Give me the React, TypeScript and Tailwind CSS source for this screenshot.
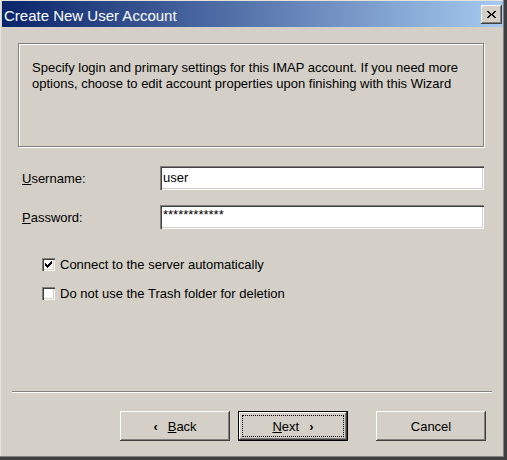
import React from "react";

const raised =
  "shadow-[inset_-1px_-1px_0_#404040,inset_1px_1px_0_#ffffff,inset_-2px_-2px_0_#808080,inset_2px_2px_0_#d4d0c8]";
const sunken =
  "shadow-[inset_1px_1px_0_#808080,inset_2px_2px_0_#404040,inset_-1px_-1px_0_#ffffff,inset_-2px_-2px_0_#d4d0c8]";

function Checkbox({ checked }: { checked: boolean }) {
  return (
    <div className={`relative w-[13px] h-[13px] shrink-0 bg-white ${sunken}`}>
      {checked && (
        <svg width="13" height="13" className="absolute inset-0" shapeRendering="crispEdges">
          <g fill="#000">
            <rect x="9" y="3" width="1" height="1" />
            <rect x="8" y="4" width="2" height="1" />
            <rect x="3" y="5" width="1" height="1" />
            <rect x="7" y="5" width="3" height="1" />
            <rect x="3" y="6" width="2" height="1" />
            <rect x="6" y="6" width="3" height="1" />
            <rect x="3" y="7" width="5" height="1" />
            <rect x="4" y="8" width="3" height="1" />
            <rect x="5" y="9" width="1" height="1" />
          </g>
        </svg>
      )}
    </div>
  );
}

function CloseGlyph() {
  return (
    <svg width="9" height="7" shapeRendering="crispEdges">
      <g fill="#000">
        <rect x="0" y="0" width="2" height="1" />
        <rect x="7" y="0" width="2" height="1" />
        <rect x="1" y="1" width="2" height="1" />
        <rect x="6" y="1" width="2" height="1" />
        <rect x="2" y="2" width="2" height="1" />
        <rect x="5" y="2" width="2" height="1" />
        <rect x="3" y="3" width="3" height="1" />
        <rect x="2" y="4" width="2" height="1" />
        <rect x="5" y="4" width="2" height="1" />
        <rect x="1" y="5" width="2" height="1" />
        <rect x="6" y="5" width="2" height="1" />
        <rect x="0" y="6" width="2" height="1" />
        <rect x="7" y="6" width="2" height="1" />
      </g>
    </svg>
  );
}

export default function App() {
  return (
    <div className="w-[507px] h-[460px] bg-[#d4d0c8] flex flex-col text-[13px] leading-[15px] text-black font-['Liberation_Sans',Arial,sans-serif] shadow-[inset_-3px_-3px_0_#404040,inset_-4px_-4px_0_#808080,inset_1px_1px_0_#e6e3dd] overflow-hidden">
      {/* Title bar */}
      <div className="mt-[1px] ml-[2px] mr-[4px] h-[26px] flex items-center justify-between pl-[2px] pr-[1px] bg-[linear-gradient(to_right,#0a246a,#a6caf0)]">
        <span className="text-white text-[15px] leading-[17px] pt-[2px]">Create New User Account</span>
        <div className={`w-[21px] h-[19px] flex items-center justify-center bg-[#d4d0c8] ${raised}`}>
          <CloseGlyph />
        </div>
      </div>

      {/* Description */}
      <div className="mt-[16px] ml-[18px] w-[466px] h-[104px] border border-[#808080] shadow-[inset_1px_1px_0_#ffffff,1px_1px_0_#ffffff] pl-[13px] pt-[16px] leading-[16px]">
        Specify login and primary settings for this IMAP account. If you need more
        <br />
        options, choose to edit account properties upon finishing with this Wizard
      </div>

      {/* Username */}
      <div className="mt-[19px] ml-[22px] flex">
        <div className="w-[138px] pt-[5px]">
          <u>U</u>sername:
        </div>
        <div className={`w-[324px] h-[24px] bg-white pl-[3px] pt-[4px] ${sunken}`}>user</div>
      </div>

      {/* Password */}
      <div className="mt-[15px] ml-[22px] flex">
        <div className="w-[138px] pt-[5px]">
          <u>P</u>assword:
        </div>
        <div className={`w-[324px] h-[24px] bg-white pl-[3px] pt-[2px] ${sunken}`}>************</div>
      </div>

      {/* Checkboxes */}
      <div className="mt-[28px] ml-[42px] flex items-center gap-[5px]">
        <Checkbox checked />
        <span>Connect to the server automatically</span>
      </div>
      <div className="mt-[14px] ml-[42px] flex items-center gap-[5px]">
        <Checkbox checked={false} />
        <span>Do not use the Trash folder for deletion</span>
      </div>

      {/* Separator */}
      <div className="mt-[90px] ml-[12px] w-[480px] h-[2px] border-t border-b border-t-[#808080] border-b-white" />

      {/* Buttons */}
      <div className="mt-[18px] ml-[120px] flex">
        <div className={`w-[110px] h-[30px] flex items-center justify-center gap-[10px] ${raised}`}>
          <span className="font-bold">‹</span>
          <span>
            <u>B</u>ack
          </span>
        </div>
        <div className="ml-[8px] w-[110px] h-[30px] border border-black">
          <div className={`relative w-full h-full flex items-center justify-center gap-[10px] ${raised}`}>
            <span>
              <u>N</u>ext
            </span>
            <span className="font-bold">›</span>
            <div className="absolute inset-[3px] border border-dotted border-black" />
          </div>
        </div>
        <div className={`ml-[28px] w-[110px] h-[30px] flex items-center justify-center ${raised}`}>
          Cancel
        </div>
      </div>
    </div>
  );
}
